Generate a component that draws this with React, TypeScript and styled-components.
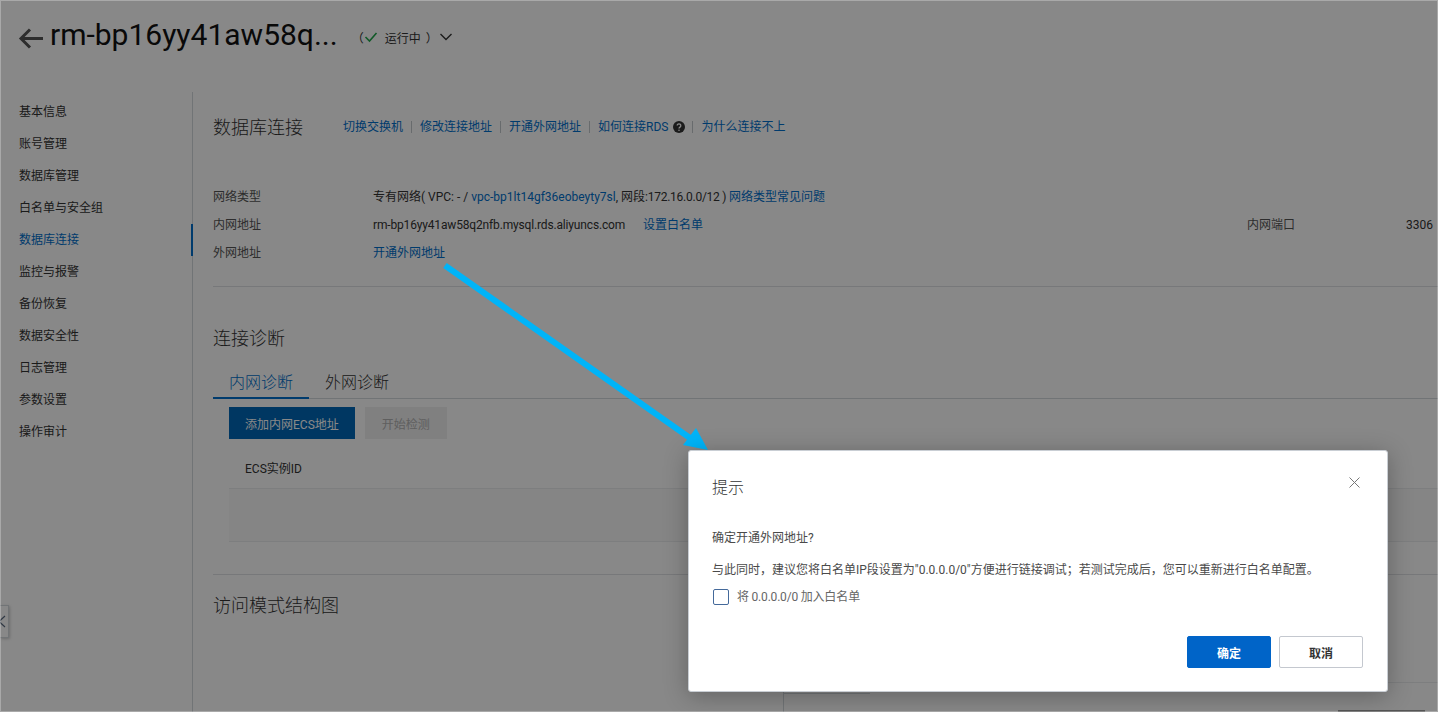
import React from 'react';
import styled, { createGlobalStyle } from 'styled-components';

const GlobalStyle = createGlobalStyle`
    html, body {
        margin: 0;
        padding: 0;
        background: #fff;
    }
    body {
        font-family: "Roboto", "Noto Sans CJK SC", sans-serif;
        font-size: 12px;
        color: #333;
    }
`;

const Page = styled.div`
    position: relative;
    width: 1438px;
    height: 712px;
    overflow: hidden;
    background: #fff;
    display: flex;
    flex-direction: column;
`;

const Header = styled.header`
    height: 92px;
    flex: none;
    display: flex;
    align-items: flex-start;
    padding: 15px 0 0 18px;
    box-sizing: border-box;
`;

const BackIcon = styled.svg`
    width: 26px;
    height: 24px;
    margin: 11px 6px 0 0;
    flex: none;
`;

const Title = styled.h1`
    margin: 0;
    font-size: 30px;
    line-height: 40px;
    font-weight: 400;
    color: #111;
`;

const Status = styled.div`
    display: flex;
    align-items: center;
    margin: 13px 0 0 14px;
    height: 18px;
    font-size: 12px;
    color: #333;
`;

const StatusText = styled.span`
    margin: 0 5px 0 7px;
`;

const StatusChevron = styled.svg`
    margin-left: 1px;
`;

const Body = styled.div`
    flex: 1;
    min-height: 0;
    display: flex;
`;

const Sidebar = styled.nav`
    width: 193px;
    flex: none;
    box-sizing: border-box;
    border-right: 1px solid #d5d9de;
    padding-top: 4px;
`;

const NavItem = styled.div<{ $active?: boolean }>`
    position: relative;
    height: 32px;
    line-height: 32px;
    padding-left: 19px;
    font-size: 12px;
    color: ${p => (p.$active ? '#0070cc' : '#333')};

    &::after {
        content: '';
        display: ${p => (p.$active ? 'block' : 'none')};
        position: absolute;
        right: -1px;
        top: 0;
        width: 2px;
        height: 32px;
        background: #0070cc;
    }
`;

const Main = styled.main`
    flex: 1;
    min-width: 0;
    padding: 22px 0 0 20px;
`;

const TitleRow = styled.div`
    display: flex;
    align-items: center;
    height: 28px;
`;

const SectionTitle = styled.h2`
    margin: 0;
    font-size: 18px;
    line-height: 28px;
    font-weight: 300;
    color: #333;
`;

const Links = styled.div`
    display: flex;
    align-items: center;
    margin: -3px 0 0 40px;
`;

const LinkText = styled.a`
    color: #0070cc;
    font-size: 12px;
    line-height: 18px;
`;

const LinkSep = styled.span`
    width: 1px;
    height: 12px;
    margin: 0 8px;
    background: #c4c8cc;
`;

const HelpIcon = styled.svg`
    width: 12px;
    height: 12px;
    margin: 0 -1px 0 5px;
`;

const InfoList = styled.div`
    margin-top: 41px;
    padding-bottom: 19px;
    border-bottom: 1px solid #dfe2e5;
`;

const InfoRow = styled.div`
    display: grid;
    grid-template-columns: 160px 874px 159px auto;
    height: 28px;
    line-height: 28px;
    color: #333;
`;

const InfoLabel = styled.span`
    color: #555;
`;

const InfoLink = styled(LinkText)<{ $gap?: number }>`
    line-height: 28px;
    margin-left: ${p => p.$gap ?? 0}px;
`;

const TightText = styled.span<{ $spacing: number }>`
    letter-spacing: ${p => p.$spacing}px;
`;

const DiagTitle = styled(SectionTitle)`
    margin-top: 38px;
`;

const Tabs = styled.div`
    display: flex;
    margin-top: 14px;
    height: 32px;
    box-sizing: border-box;
    border-bottom: 1px solid #d5d9de;
`;

const Tab = styled.div<{ $active?: boolean }>`
    width: 96px;
    height: 32px;
    box-sizing: border-box;
    text-align: center;
    font-size: 16px;
    font-weight: 300;
    line-height: 32px;
    color: ${p => (p.$active ? '#0070cc' : '#333')};
    border-bottom: 2px solid ${p => (p.$active ? '#0070cc' : 'transparent')};
`;

const Toolbar = styled.div`
    display: flex;
    gap: 10px;
    margin: 8px 0 0 16px;
`;

const FlatButton = styled.button<{ $disabled?: boolean }>`
    height: 32px;
    min-width: 82px;
    padding: 0 16px;
    border: 0;
    font: inherit;
    font-size: 12px;
    color: ${p => (p.$disabled ? '#b3b3b3' : '#fff')};
    background: ${p => (p.$disabled ? '#f0f0f0' : '#0068b8')};
`;

const Table = styled.div`
    margin: 15px 0 0 16px;
`;

const TableHead = styled.div`
    height: 34px;
    padding-left: 16px;
    line-height: 30px;
    color: #333;
    border-bottom: 1px solid #ebedef;
`;

const EmptyRow = styled.div`
    height: 52px;
    border-bottom: 1px solid #ebedef;
    background: #fafafa;
`;

const Divider = styled.div`
    height: 1px;
    margin-top: 32px;
    background: #dfe2e5;
`;

const DiagramTitle = styled(SectionTitle)`
    margin-top: 17px;
`;

const DiagramFrame = styled.div`
    position: relative;
    height: 80px;
    margin: 62px 0 0 570px;
    border-top: 1px solid #ebedef;
    border-left: 1px solid #d5d9de;
`;

const DiagramEdge = styled.div`
    position: absolute;
    left: 0;
    top: 10px;
    width: 86px;
    height: 1px;
    background: #d5d9de;
`;

const DiagramBar = styled.div`
    position: absolute;
    left: 554px;
    top: 27px;
    width: 87px;
    height: 4px;
    background: #a0a0a0;
`;

const CollapseTab = styled.div`
    position: absolute;
    left: 0;
    top: 605px;
    width: 9px;
    height: 33px;
    box-sizing: border-box;
    border: 1px solid #d5d9de;
    border-left: 0;
    background: #fff;
    overflow: hidden;
    box-shadow: 1px 1px 3px rgba(0, 0, 0, 0.2);
`;

const CollapseIcon = styled.svg`
    display: block;
    width: 8px;
    height: 31px;
`;

const Overlay = styled.div`
    position: absolute;
    inset: 0;
    background: rgba(0, 0, 0, 0.467);
    box-shadow: inset 0 0 0 1px rgba(255, 255, 255, 0.28);
`;

const Arrow = styled.svg`
    position: absolute;
    left: 0;
    top: 0;
    width: 1438px;
    height: 712px;
    pointer-events: none;
`;

const Modal = styled.div`
    position: absolute;
    left: 688px;
    top: 450px;
    width: 700px;
    height: 242px;
    box-sizing: border-box;
    padding: 0 24px 0 23px;
    background: #fff;
    border-radius: 3px;
    border: 1px solid #c9ced4;
    box-shadow: 0 4px 24px rgba(0, 0, 0, 0.28);
    display: flex;
    flex-direction: column;
`;

const ModalTitle = styled.div`
    font-size: 16px;
    font-weight: 300;
    line-height: 24px;
    margin-top: 25px;
    color: #333;
`;

const ModalText = styled.p`
    margin: 0;
    line-height: 18px;
    color: #4a4a4a;
`;

const ConfirmText = styled(ModalText)`
    margin-top: 29px;
`;

const AdviceText = styled(ModalText)`
    margin-top: 14px;
`;

const CheckRow = styled.label`
    display: flex;
    align-items: center;
    gap: 8px;
    margin-top: 9px;
    color: #666;
    line-height: 18px;
`;

const CheckBox = styled.span`
    width: 16px;
    height: 16px;
    box-sizing: border-box;
    border: 1px solid #44699a;
    border-radius: 2px;
    margin-left: 1px;
    background: #fff;
`;

const CloseIcon = styled.svg`
    position: absolute;
    right: 27px;
    top: 26px;
    width: 11px;
    height: 11px;
`;

const ModalFooter = styled.div`
    display: flex;
    justify-content: flex-end;
    gap: 8px;
    margin-top: auto;
    margin-bottom: 23px;
`;

const ModalButton = styled.button<{ $primary?: boolean }>`
    width: 84px;
    height: 32px;
    box-sizing: border-box;
    border-radius: 2px;
    font: inherit;
    font-size: 12px;
    font-weight: 700;
    color: ${p => (p.$primary ? '#fff' : '#333')};
    background: ${p => (p.$primary ? '#0064c8' : '#fff')};
    border: 1px solid ${p => (p.$primary ? '#0064c8' : '#c4c8cf')};
`;

const navItems = [
    '基本信息',
    '账号管理',
    '数据库管理',
    '白名单与安全组',
    '数据库连接',
    '监控与报警',
    '备份恢复',
    '数据安全性',
    '日志管理',
    '参数设置',
    '操作审计',
];

export default () => (
    <Page>
        <GlobalStyle/>
        <Header>
            <BackIcon viewBox={'0 0 26 24'}>
                <path d={'M25 12.5H3M12 3.5l-9 9 9 9'} fill={'none'} stroke={'#555'} strokeWidth={3}/>
            </BackIcon>
            <Title>rm-bp16yy41aw58q...</Title>
            <Status>
                （
                <svg width={14} height={12} viewBox={'0 0 14 12'}>
                    <path d={'M1.5 6l4 4 7-8'} fill={'none'} stroke={'#1fa84a'} strokeWidth={1.6}/>
                </svg>
                <StatusText>运行中</StatusText>
                ）
                <StatusChevron width={14} height={10} viewBox={'0 0 14 10'}>
                    <path d={'M1.5 2l5.5 5.5L12.5 2'} fill={'none'} stroke={'#333'} strokeWidth={1.4}/>
                </StatusChevron>
            </Status>
        </Header>
        <Body>
            <Sidebar>
                {navItems.map(item => (
                    <NavItem key={item} $active={item === '数据库连接'}>{item}</NavItem>
                ))}
            </Sidebar>
            <Main>
                <TitleRow>
                    <SectionTitle>数据库连接</SectionTitle>
                    <Links>
                        <LinkText>切换交换机</LinkText>
                        <LinkSep/>
                        <LinkText>修改连接地址</LinkText>
                        <LinkSep/>
                        <LinkText>开通外网地址</LinkText>
                        <LinkSep/>
                        <LinkText>如何连接RDS</LinkText>
                        <HelpIcon viewBox={'0 0 12 12'}>
                            <circle cx={6} cy={6} r={6} fill={'#333'}/>
                            <path d={'M4.2 4.6a1.8 1.7 0 1 1 2.7 1.5c-.6.4-.9.7-.9 1.4'} fill={'none'} stroke={'#fff'} strokeWidth={1.3}/>
                            <circle cx={6} cy={9.3} r={.8} fill={'#fff'}/>
                        </HelpIcon>
                        <LinkSep/>
                        <LinkText>为什么连接不上</LinkText>
                    </Links>
                </TitleRow>
                <InfoList>
                    <InfoRow>
                        <InfoLabel>网络类型</InfoLabel>
                        <span>
                            专有网络( VPC: - / <LinkText>vpc-bp1lt14gf36eobeyty7sl</LinkText>, 网段<TightText $spacing={-0.25}>:172.16.0.0/12 ) </TightText><LinkText>网络类型常见问题</LinkText>
                        </span>
                    </InfoRow>
                    <InfoRow>
                        <InfoLabel>内网地址</InfoLabel>
                        <span>
                            <TightText $spacing={-0.16}>rm-bp16yy41aw58q2nfb.mysql.rds.aliyuncs.com</TightText>
                            <InfoLink $gap={18}>设置白名单</InfoLink>
                        </span>
                        <InfoLabel>内网端口</InfoLabel>
                        <span>3306</span>
                    </InfoRow>
                    <InfoRow>
                        <InfoLabel>外网地址</InfoLabel>
                        <InfoLink>开通外网地址</InfoLink>
                    </InfoRow>
                </InfoList>
                <DiagTitle>连接诊断</DiagTitle>
                <Tabs>
                    <Tab $active>内网诊断</Tab>
                    <Tab>外网诊断</Tab>
                </Tabs>
                <Toolbar>
                    <FlatButton>添加内网ECS地址</FlatButton>
                    <FlatButton $disabled>开始检测</FlatButton>
                </Toolbar>
                <Table>
                    <TableHead>ECS实例ID</TableHead>
                    <EmptyRow/>
                </Table>
                <Divider/>
                <DiagramTitle>访问模式结构图</DiagramTitle>
                <DiagramFrame>
                    <DiagramEdge/>
                    <DiagramBar/>
                </DiagramFrame>
            </Main>
        </Body>
        <CollapseTab>
            <CollapseIcon viewBox={'0 0 8 31'}>
                <path d={'M5 10l-6 5.5 6 5.5'} fill={'none'} stroke={'#5b6b80'} strokeWidth={1.2}/>
            </CollapseIcon>
        </CollapseTab>
        <Overlay/>
        <Arrow viewBox={'0 0 1438 712'}>
            <path d={'M445 265.5L690 438'} stroke={'#00b4f8'} strokeWidth={6} fill={'none'}/>
            <path d={'M708 450L696 428L683 445Z'} fill={'#00b4f8'}/>
        </Arrow>
        <Modal>
            <ModalTitle>提示</ModalTitle>
            <CloseIcon viewBox={'0 0 11 11'}>
                <path d={'M.5.5l10 10M10.5.5l-10 10'} fill={'none'} stroke={'#777'} strokeWidth={1}/>
            </CloseIcon>
            <ConfirmText>确定开通外网地址?</ConfirmText>
            <AdviceText>与此同时，建议您将白名单IP段设置为"0.0.0.0/0"方便进行链接调试；若测试完成后，您可以重新进行白名单配置。</AdviceText>
            <CheckRow>
                <CheckBox/>
                <span><TightText $spacing={-0.2}>将 0.0.0.0/0 加入</TightText>白名单</span>
            </CheckRow>
            <ModalFooter>
                <ModalButton $primary>确定</ModalButton>
                <ModalButton>取消</ModalButton>
            </ModalFooter>
        </Modal>
    </Page>
);
